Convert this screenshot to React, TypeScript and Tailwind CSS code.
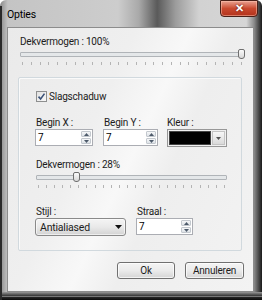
import React from "react";

const font = { fontFamily: 'Roboto, "Noto Sans", sans-serif' };

function Ticks({ count }: { count: number }) {
  return (
    <div className="flex justify-between px-[2px] h-[3px]">
      {Array.from({ length: count }).map((_, i) => (
        <div key={i} className="w-px h-[3px] bg-[#b4b4b4]" />
      ))}
    </div>
  );
}

function Slider({ pos, ticks }: { pos: number; ticks: number }) {
  return (
    <div className="flex flex-col gap-[2px]">
      <div className="relative h-[12px] flex items-center">
        <div className="w-full h-[5px] border border-[#b0b4b8] bg-[#e4e7e9] rounded-[1px]" />
        <div
          className="absolute top-[1px] w-[7px] h-[10px] border border-[#6f6f6f] bg-gradient-to-b from-[#fbfbfb] to-[#d8d8d8] rounded-t-[2px] rounded-b-[3px]"
          style={{ left: pos }}
        />
      </div>
      <Ticks count={ticks} />
    </div>
  );
}

function SpinBox({ value, width }: { value: string; width: number }) {
  return (
    <div
      className="h-[17px] flex items-stretch border border-[#abadb3] bg-white"
      style={{ width }}
    >
      <div className="flex-1 pl-[2px] text-[10px] leading-[15px] text-black">{value}</div>
      <div className="w-[12px] flex flex-col gap-px p-px">
        <div className="flex-1 flex items-center justify-center border border-[#c3c8ce] bg-gradient-to-b from-[#f6f7f8] to-[#dde2e7] rounded-[1px]">
          <svg width="5" height="3" viewBox="0 0 5 3"><path d="M0 3 L2.5 0 L5 3Z" fill="#4d5a6a" /></svg>
        </div>
        <div className="flex-1 flex items-center justify-center border border-[#c3c8ce] bg-gradient-to-b from-[#f6f7f8] to-[#dde2e7] rounded-[1px]">
          <svg width="5" height="3" viewBox="0 0 5 3"><path d="M0 0 L2.5 3 L5 0Z" fill="#4d5a6a" /></svg>
        </div>
      </div>
    </div>
  );
}

const btn =
  "h-[17px] rounded-[3px] border border-[#707070] bg-gradient-to-b from-[#f4f4f4] via-[#ebebeb] to-[#d5d5d5] flex items-center justify-center leading-[13px] shadow-[inset_0_0_0_1px_rgba(255,255,255,0.7)]";

export default function App() {
  return (
    <div
      className="w-[262px] h-[300px] relative overflow-hidden flex flex-col text-[10px] tracking-[-0.2px] text-[#1c1c1c] rounded-t-[6px] bg-[linear-gradient(90deg,#8a8a8a_0%,#c4c4c4_3%,#cdcdcd_45%,#a9a9a9_53%,#5a5a5a_60%,#9c9c9c_67%,#d2d2d2_76%,#d6d6d6_94%,#8a8a8a_97%,#1a1a1a_100%)]"
      style={font}
    >
      {/* title bar */}
      <div className="h-[27px] shrink-0 flex items-start justify-between pl-[7px] pr-[4px]">
        <div className="pt-[8px] text-[10.5px] leading-[13px] text-black">Opties</div>
        <div className="w-[38px] h-[17px] rounded-b-[4px] border border-[#4a2018] bg-gradient-to-b from-[#e9a190] via-[#c9492f] to-[#b2321b] flex items-center justify-center shadow-[inset_0_0_0_1px_rgba(255,200,180,0.5)]">
          <span className="text-white text-[11px] font-bold leading-none [text-shadow:0_0_2px_#400]">✕</span>
        </div>
      </div>
      {/* client */}
      <div className="h-[265px] shrink-0 ml-[7px] mr-[8px] border border-[#8c8c8c] bg-[linear-gradient(115deg,#eaeaea_0%,#efefef_35%,#f8f8f8_50%,#eeeeee_62%,#f3f3f3_100%)] flex flex-col pl-[12px] pr-[9px] pt-[7px]">
        <div className="leading-[13px]">Dekvermogen : 100%</div>
        <Slider pos={218} ticks={26} />
        {/* group box */}
        <div className="mt-[12px] ml-[-2px] w-[224px] h-[174px] shrink-0 border border-[#d1d9de] rounded-[2px] shadow-[inset_1px_1px_0_#fafafa] flex flex-col pl-[16px] pt-[12px]">
          <div className="flex items-center gap-[2px] ml-[1px]">
            <div className="w-[11px] h-[11px] border border-[#8e8f8f] bg-gradient-to-br from-[#e2e2e2] to-[#f8f8f8] flex items-center justify-center">
              <svg width="9" height="9" viewBox="0 0 9 9">
                <path d="M1.5 4.6 L3.6 7 L7.5 1.6" stroke="#3b5278" strokeWidth="1.6" fill="none" />
              </svg>
            </div>
            <span className="leading-[13px]">Slagschaduw</span>
          </div>
          <div className="flex mt-[13px]">
            <div className="flex flex-col w-[58px]">
              <span className="leading-[13px] pl-[1px]">Begin X :</span>
              <SpinBox value="7" width={58} />
            </div>
            <div className="flex flex-col ml-[10px] w-[55px]">
              <span className="leading-[13px] pl-[1px]">Begin Y :</span>
              <SpinBox value="7" width={55} />
            </div>
            <div className="flex flex-col ml-[9px]">
              <span className="leading-[13px]">Kleur :</span>
              <div className="w-[60px] h-[18px] border border-[#979797] bg-[#f0f0f0] flex p-px gap-px">
                <div className="flex-1 bg-black border border-[#444]" />
                <div className="w-[13px] flex items-center justify-center bg-gradient-to-b from-[#f7f7f7] to-[#dadada] border border-[#c4c4c4]">
                  <svg width="5" height="3" viewBox="0 0 5 3"><path d="M0 0 L2.5 3 L5 0Z" fill="#555" /></svg>
                </div>
              </div>
            </div>
          </div>
          <div className="mt-[11px] leading-[13px] pl-[1px]">Dekvermogen : 28%</div>
          <div className="w-[191px] ml-[1px]">
            <Slider pos={37} ticks={24} />
          </div>
          <div className="flex mt-[17px]">
            <div className="flex flex-col">
              <span className="leading-[13px] pl-[1px]">Stijl :</span>
              <div className="w-[91px] h-[18px] rounded-[3px] border border-[#8a8a8a] bg-gradient-to-b from-[#f4f4f4] via-[#e9e9e9] to-[#d3d3d3] flex items-center justify-between pl-[4px] pr-[3px] shadow-[inset_0_0_0_1px_rgba(255,255,255,0.6)]">
                <span className="text-[10.5px] leading-[13px]">Antialiased</span>
                <svg width="7" height="4" viewBox="0 0 7 4"><path d="M0 0 L3.5 4 L7 0Z" fill="#111" /></svg>
              </div>
            </div>
            <div className="flex flex-col ml-[10px]">
              <span className="leading-[13px] pl-[1px]">Straal :</span>
              <SpinBox value="7" width={57} />
            </div>
          </div>
        </div>
        {/* buttons */}
        <div className="flex justify-end mt-[11px]">
          <div className={`${btn} w-[58px]`}>Ok</div>
          <div className={`${btn} w-[59px] ml-[10px]`}>Annuleren</div>
        </div>
      </div>
      {/* bottom frame */}
      <div className="flex-1 bg-gradient-to-b from-[#9a9a9a] via-[#333] to-[#0a0a0a]" />
      <div className="absolute left-0 right-0 bottom-[3px] h-px bg-[#777]" />
      <div className="absolute left-0 top-[6px] bottom-0 w-[2px] bg-[#2a2a2a]" />
    </div>
  );
}
